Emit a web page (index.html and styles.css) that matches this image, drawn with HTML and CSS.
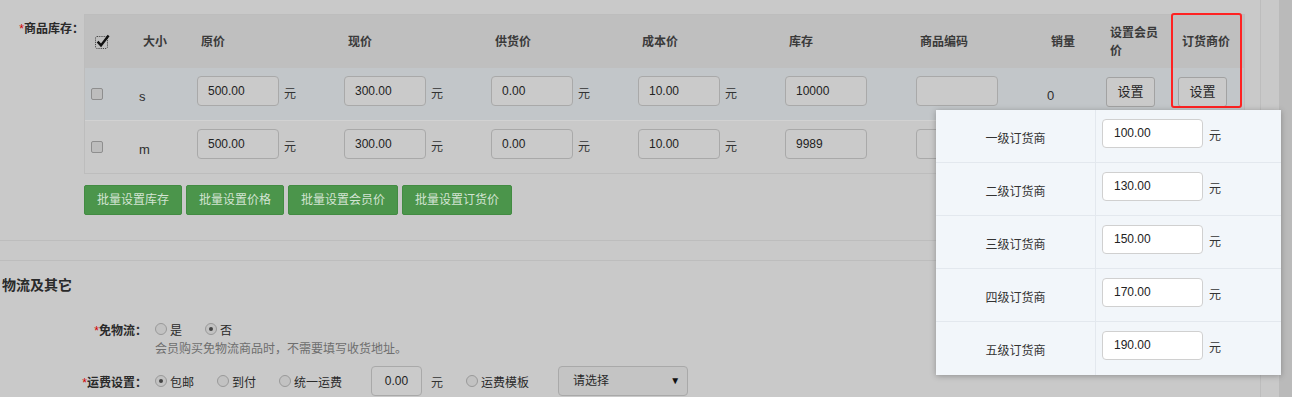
FILE: index.html
```html
<!DOCTYPE html>
<html lang="zh-CN">
<head>
    <meta charset="UTF-8">
    <title>商品库存</title>
    <link rel="stylesheet" href="styles.css">
</head>
<body>
    <div class="page">
        <div class="goods">
            <div class="stock">
                <div class="stock-label"><span class="req">*</span>商品库存：</div>
                <div class="sku-table">
                    <div class="sku-row sku-head">
                        <div class="th">
                            <svg class="check-all" width="16" height="16" viewBox="0 0 16 16">
                                <rect x="0.5" y="2.5" width="12" height="12" rx="1.5" fill="none" stroke="#4a4a4a" stroke-dasharray="1.2 1"/>
                                <path d="M2.6 7.6 L6 11.4 L13.6 1.4" fill="none" stroke="#111" stroke-width="2.4"/>
                            </svg>
                        </div>
                        <div class="th">大小</div>
                        <div class="th">原价</div>
                        <div class="th">现价</div>
                        <div class="th">供货价</div>
                        <div class="th">成本价</div>
                        <div class="th">库存</div>
                        <div class="th">商品编码</div>
                        <div class="th">销量</div>
                        <div class="th wrap">设置会员价</div>
                        <div class="th wrap">订货商价</div>
                    </div>
                    <div class="sku-row hover">
                        <div class="td"><span class="box"></span></div>
                        <div class="td name">s</div>
                        <div class="td"><span class="ipt">500.00</span><span class="unit">元</span></div>
                        <div class="td"><span class="ipt">300.00</span><span class="unit">元</span></div>
                        <div class="td"><span class="ipt">0.00</span><span class="unit">元</span></div>
                        <div class="td"><span class="ipt">10.00</span><span class="unit">元</span></div>
                        <div class="td"><span class="ipt">10000</span></div>
                        <div class="td"><span class="ipt"></span></div>
                        <div class="td sold">0</div>
                        <div class="td"><span class="btn">设置</span></div>
                        <div class="td"><span class="btn">设置</span></div>
                    </div>
                    <div class="sku-row">
                        <div class="td"><span class="box"></span></div>
                        <div class="td name">m</div>
                        <div class="td"><span class="ipt">500.00</span><span class="unit">元</span></div>
                        <div class="td"><span class="ipt">300.00</span><span class="unit">元</span></div>
                        <div class="td"><span class="ipt">0.00</span><span class="unit">元</span></div>
                        <div class="td"><span class="ipt">10.00</span><span class="unit">元</span></div>
                        <div class="td"><span class="ipt">9989</span></div>
                        <div class="td"><span class="ipt"></span></div>
                        <div class="td"></div>
                        <div class="td"></div>
                        <div class="td"></div>
                    </div>
                </div>
            </div>
            <div class="batch">
                <span class="btn-green">批量设置库存</span>
                <span class="btn-green">批量设置价格</span>
                <span class="btn-green">批量设置会员价</span>
                <span class="btn-green">批量设置订货价</span>
            </div>
        </div>

        <div class="logistics">
            <div class="section-title">物流及其它</div>
            <div class="form-row">
                <div class="form-label"><span class="req">*</span>免物流：</div>
                <div class="form-ctrl">
                    <span class="radio"></span><span class="radio-text">是</span>
                    <span class="radio on"></span><span class="radio-text">否</span>
                </div>
            </div>
            <div class="help">会员购买免物流商品时，不需要填写收货地址。</div>
            <div class="form-row freight">
                <div class="form-label"><span class="req">*</span>运费设置：</div>
                <div class="form-ctrl">
                    <span class="radio on"></span><span class="radio-text">包邮</span>
                    <span class="radio"></span><span class="radio-text">到付</span>
                    <span class="radio"></span><span class="radio-text">统一运费</span>
                    <span class="ipt small">0.00</span><span class="unit wide">元</span>
                    <span class="radio"></span><span class="radio-text">运费模板</span>
                    <span class="select">请选择<span class="arrow">▼</span></span>
                </div>
            </div>
        </div>
    </div>
    <div class="gutter"></div>
    <div class="scrollbar"></div>

    <div class="mark"></div>

    <div class="popup">
        <div class="pop-row"><div class="pop-label">一级订货商</div><div class="pop-val"><span class="pop-ipt">100.00</span><span class="pop-unit">元</span></div></div>
        <div class="pop-row"><div class="pop-label">二级订货商</div><div class="pop-val"><span class="pop-ipt">130.00</span><span class="pop-unit">元</span></div></div>
        <div class="pop-row"><div class="pop-label">三级订货商</div><div class="pop-val"><span class="pop-ipt">150.00</span><span class="pop-unit">元</span></div></div>
        <div class="pop-row"><div class="pop-label">四级订货商</div><div class="pop-val"><span class="pop-ipt">170.00</span><span class="pop-unit">元</span></div></div>
        <div class="pop-row"><div class="pop-label">五级订货商</div><div class="pop-val"><span class="pop-ipt">190.00</span><span class="pop-unit">元</span></div></div>
    </div>
</body>
</html>
```

FILE: styles.css
```css
body {
    margin: 0;
    padding: 0;
    height: 397px;
    overflow: hidden;
    position: relative;
    display: flex;
    background: #c9c9c9;
    font-family: "Liberation Sans", "Noto Sans CJK SC", sans-serif;
    font-size: 12px;
    color: #2e2e2e;
}

.page {
    width: 1260px;
    flex: none;
    border-right: 1px solid #bdbdbd;
}

.gutter {
    width: 18px;
    flex: none;
}

.scrollbar {
    width: 13px;
    flex: none;
    background: #bababa;
}

.req {
    color: #d40000;
}

/* goods stock */
.goods {
    padding-top: 14px;
    padding-bottom: 25px;
    border-bottom: 1px solid #bdbdbd;
}

.stock {
    display: flex;
}

.stock-label {
    width: 84px;
    padding-top: 7px;
    text-align: right;
    font-weight: bold;
    line-height: 16px;
    color: #2a2a2a;
}

.stock-label .req {
    font-weight: normal;
}

.sku-table {
    border: 1px solid #bdbdbd;
}

.sku-row {
    display: grid;
    grid-template-columns: 54px 58px 147px 147px 147px 147px 131px 131px 59px 72px 66px;
    align-items: center;
    height: 52px;
}

.sku-head {
    height: 53px;
    background: #bfbfbf;
}

.sku-row.hover {
    background: #c2c6c9;
}

.sku-row + .sku-row + .sku-row {
    border-top: 1px solid #d2d2d2;
}

.th {
    padding-left: 4px;
    padding-right: 12px;
    font-weight: bold;
    color: #3a3a3a;
    line-height: 18px;
}

.th:first-child {
    padding-left: 10px;
    height: 16px;
}

.check-all {
    display: block;
}

.td {
    display: flex;
    align-items: center;
}

.td:first-child {
    padding-left: 6px;
}

.name {
    padding-top: 4px;
    font-size: 13px;
}

.sold {
    padding-top: 2px;
    font-size: 13px;
}

.box {
    width: 12px;
    height: 12px;
    box-sizing: border-box;
    border: 1px solid #8e8e8e;
    border-radius: 2px;
    background: #bdbdbd;
}

.ipt {
    display: inline-block;
    width: 82px;
    height: 30px;
    box-sizing: border-box;
    margin-bottom: 6px;
    padding: 0 10px;
    border: 1px solid #a9a9a9;
    border-radius: 4px;
    background: #cacaca;
    line-height: 28px;
    color: #222;
}

.unit {
    margin-left: 5px;
    margin-bottom: 4px;
    color: #333;
}

.btn {
    display: inline-block;
    width: 49px;
    height: 30px;
    box-sizing: border-box;
    margin-bottom: 4px;
    border: 1px solid #a2a2a2;
    border-radius: 3px;
    background: #cacaca;
    text-align: center;
    line-height: 28px;
    font-size: 13px;
    color: #262626;
}

.batch {
    display: flex;
    gap: 4px;
    margin-top: 11px;
    margin-left: 84px;
}

.btn-green {
    height: 30px;
    box-sizing: border-box;
    padding: 0 12px;
    border: 1px solid #428b42;
    border-radius: 2px;
    background: #4b954b;
    color: #d3e4d3;
    line-height: 28px;
}

/* logistics */
.logistics {
    margin-top: 19px;
    border-top: 1px solid #bdbdbd;
    padding-top: 14px;
}

.section-title {
    padding-left: 2px;
    font-size: 14px;
    font-weight: bold;
    line-height: 20px;
    color: #2a2a2a;
}

.form-row {
    display: flex;
    align-items: center;
    margin-top: 24px;
    height: 20px;
}

.form-row.freight {
    margin-top: 7px;
    height: 30px;
}

.form-label {
    width: 147px;
    text-align: right;
    font-weight: bold;
    color: #2a2a2a;
}

.form-label .req {
    font-weight: normal;
}

.form-ctrl {
    display: flex;
    align-items: center;
    margin-left: 8px;
}

.radio {
    width: 12px;
    height: 12px;
    box-sizing: border-box;
    border: 1px solid #999;
    border-radius: 50%;
    background: #c2c2c2;
    position: relative;
}

.radio.on::after {
    content: "";
    position: absolute;
    left: 3px;
    top: 3px;
    width: 4px;
    height: 4px;
    border-radius: 50%;
    background: #444;
}

.radio-text {
    margin-left: 3px;
    margin-right: 23px;
    color: #2a2a2a;
}

.help {
    margin-left: 155px;
    line-height: 20px;
    color: #6e6e6e;
}

.ipt.small {
    width: 51px;
    margin-left: 6px;
    margin-bottom: 0;
    padding: 0;
    text-align: center;
}

.unit.wide {
    margin-left: 9px;
    margin-right: 23px;
    margin-bottom: 0;
}

.select {
    display: flex;
    justify-content: space-between;
    width: 130px;
    height: 30px;
    box-sizing: border-box;
    margin-left: 6px;
    padding: 0 7px 0 14px;
    border: 1px solid #a9a9a9;
    border-radius: 4px;
    background: #c4c4c4;
    line-height: 28px;
    color: #2a2a2a;
}

.arrow {
    font-size: 10px;
    color: #111;
}

/* annotation + popup on top */
.mark {
    position: absolute;
    left: 1171px;
    top: 13px;
    width: 71px;
    height: 95px;
    box-sizing: border-box;
    border: 2px solid #ff2222;
    border-radius: 3px;
}

.popup {
    position: absolute;
    left: 936px;
    top: 110px;
    width: 345px;
    background: #f2f6fa;
    box-shadow: 0 1px 6px rgba(0, 0, 0, 0.28);
}

.pop-row {
    display: grid;
    grid-template-columns: 160px 1fr;
    height: 53px;
    box-sizing: border-box;
    border-bottom: 1px solid #e3e8ee;
}

.pop-row:last-child {
    border-bottom: none;
}

.pop-label {
    display: flex;
    align-items: center;
    justify-content: center;
    padding-top: 2px;
    border-right: 1px solid #e3e8ee;
    color: #333;
}

.pop-val {
    display: flex;
    align-items: flex-start;
    padding-top: 9px;
    padding-left: 6px;
}

.pop-ipt {
    width: 101px;
    height: 29px;
    box-sizing: border-box;
    padding: 0 11px;
    border: 1px solid #d0d0d0;
    border-radius: 4px;
    background: #fff;
    line-height: 27px;
    color: #222;
}

.pop-unit {
    margin-left: 6px;
    margin-top: 9px;
    line-height: 16px;
    color: #333;
}
```
